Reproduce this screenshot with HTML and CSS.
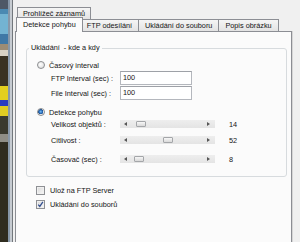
FILE: index.html
```html
<!DOCTYPE html>
<html lang="cs">
<head>
<meta charset="utf-8">
<title>Detekce pohybu</title>
<link rel="stylesheet" href="styles.css">
</head>
<body>
<div class="screen">
  <div class="desktop"></div>
  <div class="frame"></div>
  <div class="window">
    <div class="tabrow back">
      <div class="tab">Prohlížeč záznamů</div>
    </div>
    <div class="tabrow front">
      <div class="tab active">Detekce pohybu</div>
      <div class="tab">FTP odesílání</div>
      <div class="tab">Ukládání do souboru</div>
      <div class="tab">Popis obrázku</div>
    </div>
    <div class="panel">
      <fieldset class="group">
        <legend>Ukládání&nbsp; - kde a kdy</legend>
        <div class="opt"><span class="radio"></span><span>Časový interval</span></div>
        <div class="field"><span class="label">FTP Interval (sec) :</span><span class="input">100</span></div>
        <div class="field next"><span class="label">File Interval (sec) :</span><span class="input">100</span></div>
        <div class="opt second"><span class="radio on"></span><span>Detekce pohybu</span></div>
        <div class="slide">
          <span class="label">Velikost objektů :</span>
          <span class="slider"><span class="arr left"></span><span class="track"><span class="thumb" style="margin-left:6px"></span></span><span class="arr right"></span></span>
          <span class="value">14</span>
        </div>
        <div class="slide s2">
          <span class="label">Citlivost :</span>
          <span class="slider"><span class="arr left"></span><span class="track"><span class="thumb" style="margin-left:33px"></span></span><span class="arr right"></span></span>
          <span class="value">52</span>
        </div>
        <div class="slide s3">
          <span class="label">Časovač (sec) :</span>
          <span class="slider"><span class="arr left"></span><span class="track"><span class="thumb" style="margin-left:4px"></span></span><span class="arr right"></span></span>
          <span class="value">8</span>
        </div>
      </fieldset>
      <div class="checks">
        <div class="check-row"><span class="checkbox"></span><span>Ulož na FTP Server</span></div>
        <div class="check-row"><span class="checkbox on"><svg viewBox="0 0 9 9" width="9" height="9"><path d="M2.2 4.6 L3.8 6.4 L6.9 1.9" fill="none" stroke="#34508f" stroke-width="1.3"/></svg></span><span>Ukládání do souborů</span></div>
      </div>
    </div>
  </div>
</div>
</body>
</html>
```
FILE: styles.css
```css
html, body {
  margin: 0;
  padding: 0;
}
body {
  width: 300px;
  height: 242px;
  overflow: hidden;
  background: #f0f0f0;
  font-family: "Liberation Sans", Arial, sans-serif;
  font-size: 7.3px;
  color: #151515;
}
.screen {
  display: flex;
  height: 242px;
}
.desktop {
  width: 8px;
  flex: none;
  background: linear-gradient(to bottom,
    #4e5866 0 9px,
    #4a89b2 9px 14px,
    #73b3d2 14px 34px,
    #3f78a6 34px 44px,
    #9c8c74 44px 50px,
    #d9d2c4 50px 56px,
    #3a3222 56px 86px,
    #e4cf1e 86px 100px,
    #2a3cc0 100px 106px,
    #e0cc22 106px 116px,
    #3a3a2e 116px 134px,
    #8f8e86 134px 142px,
    #2f2c1f 142px 242px);
}
.frame {
  width: 5px;
  flex: none;
  background: linear-gradient(to right, #8797a8 0 2px, #c6cbd1 2px 4px, #72777c 4px 5px);
}
.window {
  flex: 1;
  padding: 7px 0 0 2px;
}
.tabrow {
  display: flex;
  height: 12px;
}
.tabrow.back {
  padding-left: 2px;
}
.tabrow.front {
  padding-left: 3px;
}
.tab {
  position: relative;
  height: 12px;
  box-sizing: border-box;
  padding: 0 5px;
  border: 1px solid #8c8e94;
  border-bottom: none;
  background: linear-gradient(#f5f5f5, #e3e3e3);
  line-height: 11px;
  white-space: nowrap;
}
.front .tab {
  padding: 0 6px;
}
.front .tab + .tab {
  margin-left: -1px;
}
.front .tab.active {
  z-index: 2;
  height: 15px;
  margin: -2px -2px -1px -2px;
  padding: 0 6px;
  background: #fbfbfb;
  line-height: 13px;
}
.panel {
  position: relative;
  z-index: 1;
  width: 277px;
  height: 211px;
  box-sizing: border-box;
  border: 1px solid #8c8e94;
  border-bottom: none;
  background: #fbfbfb;
  padding: 0 4px 0 10px;
  box-shadow: 1px 0 0 #d6d6d6;
}
.group {
  margin: 11px 0 0 0;
  border: 1px solid #d7dbde;
  border-radius: 3px;
  padding: 6px 0 11px 10px;
  min-width: 0;
}
.group legend {
  margin-left: -8px;
  padding: 0 2px;
  height: 10px;
  line-height: 10px;
}
.opt {
  display: flex;
  align-items: center;
  gap: 4px;
  height: 12px;
}
.opt.second {
  margin-top: 6px;
}
.radio {
  width: 8px;
  height: 8px;
  box-sizing: border-box;
  border: 1px solid #8b8d90;
  border-radius: 50%;
  background: radial-gradient(circle at 40% 40%, #ffffff, #d6d6d6);
}
.radio.on {
  background: radial-gradient(circle at 45% 45%, #7cc0f0 0, #2a6fc0 1.6px, #1b4f8e 2.4px, #f2f2f2 2.8px, #d8d8d8 4px);
}
.field {
  display: flex;
  align-items: center;
  height: 14px;
  padding-left: 14px;
}
.field.next {
  margin-top: 1px;
}
.label {
  width: 69px;
  flex: none;
  white-space: nowrap;
}
.input {
  width: 72px;
  height: 14px;
  box-sizing: border-box;
  border: 1px solid #b4b7bd;
  border-top-color: #9ea1a7;
  background: #ffffff;
  padding-left: 2px;
  line-height: 12px;
}
.slide {
  display: flex;
  align-items: center;
  height: 12px;
  padding-left: 14px;
}
.slide.s2 {
  margin-top: 4px;
}
.slide.s3 {
  margin-top: 7px;
}
.slider {
  display: flex;
  align-items: center;
  width: 95px;
  height: 8px;
  background: linear-gradient(#eeeeee, #e4e4e4);
}
.arr {
  display: flex;
  align-items: center;
  justify-content: center;
  height: 8px;
  flex: none;
}
.arr.left {
  width: 10px;
}
.arr.right {
  width: 14px;
}
.arr::before {
  content: "";
  border-top: 2px solid transparent;
  border-bottom: 2px solid transparent;
}
.arr.left::before {
  border-right: 3px solid #555555;
}
.arr.right::before {
  border-left: 3px solid #555555;
}
.track {
  flex: 1;
  display: flex;
  align-items: center;
  height: 8px;
}
.thumb {
  width: 10px;
  height: 6px;
  box-sizing: border-box;
  border: 1px solid #a4a6a9;
  border-radius: 1px;
  background: linear-gradient(#f7f7f7, #d9d9d9);
}
.value {
  margin-left: 14px;
}
.checks {
  margin-top: 7px;
  padding-left: 10px;
  display: flex;
  flex-direction: column;
  gap: 2px;
}
.check-row {
  display: flex;
  align-items: center;
  gap: 5px;
  height: 12px;
}
.checkbox {
  display: flex;
  width: 9px;
  height: 9px;
  box-sizing: border-box;
  border: 1px solid #8e9094;
  background: linear-gradient(135deg, #d8d8d8, #f8f8f8);
  box-shadow: inset 0 0 0 1px #f0f0f0;
}
.checkbox svg {
  margin: -1px;
}
```
